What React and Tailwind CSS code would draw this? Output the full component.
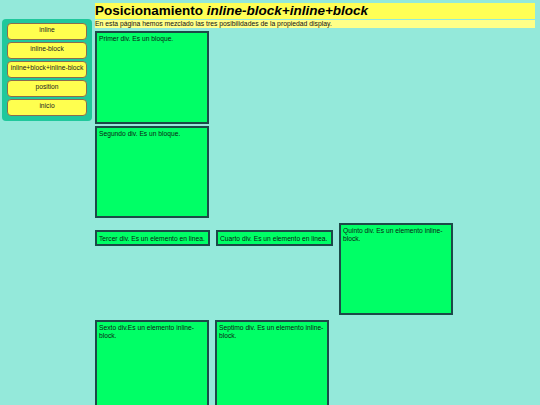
export default function App() {
  const items = ["inline", "inline-block", "inline+block+inline-block", "position", "inicio"];
  const box = "border-2 border-[#1c4a48] bg-[#00ff66] text-[6.7px] leading-[7.6px] text-[#0c1c14] pl-[2px] pr-0 pt-[2px]";
  return (
    <div className="w-[540px] h-[405px] overflow-hidden bg-[#94e9da] flex items-start" style={{ fontFamily: '"Liberation Sans", Arial, sans-serif' }}>
      <aside className="ml-[2px] mt-[19px] w-[90px] bg-[#20c89c] rounded-[4px] px-[5px] pt-[4px] pb-[5px] flex flex-col gap-[2px]">
        {items.map((t) => (
          <div key={t} className="h-[17px] bg-[#ffff4f] border border-[#8b6d4e] rounded-[4px] text-center text-[6.7px] leading-[7.6px] text-[#222] pt-[2px] whitespace-nowrap">
            {t}
          </div>
        ))}
      </aside>
      <main className="ml-[3px] mr-[5px] flex-1">
        <h1 className="mt-[3px] h-[16px] bg-[#ffff55] text-[13.5px] leading-[16px] font-bold text-black">
          Posicionamiento <i>inline-block+inline+block</i>
        </h1>
        <p className="mt-[1px] h-[8px] bg-[#ffff88] text-[6.8px] leading-[8px] text-[#111]">
          En esta página hemos mezclado las tres posibilidades de la propiedad display.
        </p>
        <div className={`mt-[3px] w-[114px] h-[93px] ${box}`}>Primer div. Es un bloque.</div>
        <div className={`mt-[2px] w-[114px] h-[92px] ${box}`}>Segundo div. Es un bloque.</div>
        <div className="mt-[3px] flex items-start">
          <div className={`mt-[9px] w-[115px] h-[16px] ${box} pt-[3px] whitespace-nowrap`}>Tercer div. Es un elemento en linea.</div>
          <div className={`mt-[9px] ml-[6px] w-[117px] h-[16px] ${box} pt-[3px] whitespace-nowrap`}>Cuarto div. Es un elemento en linea.</div>
          <div className={`mt-[2px] ml-[6px] w-[114px] h-[92px] ${box}`}>Quinto div. Es un elemento inline-block.</div>
        </div>
        <div className="mt-[5px] flex items-start">
          <div className={`w-[114px] h-[93px] ${box}`}>Sexto div.Es un elemento inline-block.</div>
          <div className={`ml-[6px] w-[114px] h-[93px] ${box}`}>Septimo div. Es un elemento inline-block.</div>
        </div>
      </main>
    </div>
  );
}
